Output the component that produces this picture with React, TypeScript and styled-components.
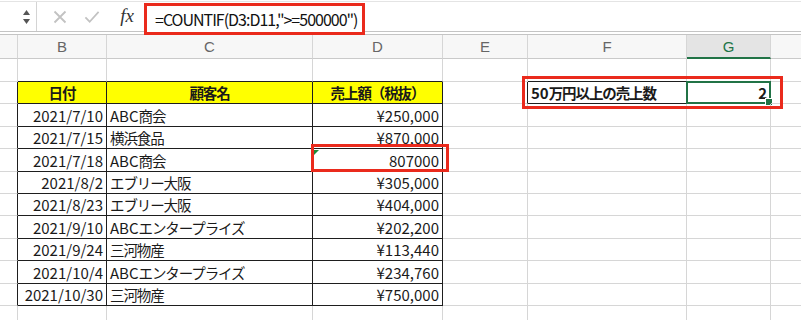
import React from "react";
import styled, { createGlobalStyle } from "styled-components";

const GlobalStyle = createGlobalStyle`
  html, body {
    margin: 0;
    padding: 0;
    background: #ffffff;
    overflow: hidden;
  }
  body {
    font-family: "Noto Sans CJK JP", "Noto Sans", sans-serif;
    color: #1a1a1a;
  }
`;

const GRID_LINE = "#d6d6d6";
const TABLE_LINE = "#1e1e1e";
const EXCEL_GREEN = "#217346";
const MARK_RED = "#ea2a1c";

const COLUMNS = [18, 89, 206, 130, 85, 159, 84, 40];
const COLUMN_TEMPLATE = COLUMNS.map((w) => `${w}px`).join(" ");
const ROW_HEIGHTS = [23, 22, 23, 22, 23, 22, 22, 23, 22, 23, 22, 23];

const Sheet = styled.div`
  width: 801px;
  height: 320px;
  overflow: hidden;
  display: flex;
  flex-direction: column;
`;

/* ---------- formula bar ---------- */

const Toolbar = styled.div`
  margin-top: 1px;
  height: 31px;
  box-sizing: border-box;
  border-top: 1px solid #e4e4e4;
  border-bottom: 1px solid #c4c4c4;
  display: flex;
  align-items: flex-start;
  flex-shrink: 0;
`;

const NameBox = styled.div`
  width: 37px;
  height: 29px;
  box-sizing: border-box;
  border-right: 1px solid #d4d4d4;
  display: flex;
  justify-content: flex-end;
  align-items: center;
  padding-right: 5px;
`;

const ToolIcon = styled.div<{ $gap: number }>`
  width: 16px;
  height: 29px;
  margin-left: ${(p) => p.$gap}px;
  display: flex;
  align-items: center;
  justify-content: center;
`;

const Fx = styled.span`
  width: 16px;
  margin-left: 19px;
  height: 29px;
  line-height: 28px;
  text-align: center;
  font-family: "Liberation Serif", "DejaVu Serif", serif;
  font-style: italic;
  font-size: 19px;
  color: #333;
`;

const FormulaBox = styled.div`
  position: relative;
  z-index: 2;
  margin-left: 9px;
  margin-top: 1px;
  width: 221px;
  height: 32px;
  box-sizing: border-box;
  border: 3px solid ${MARK_RED};
  background: #fff;
  display: flex;
  align-items: center;
  padding-left: 8px;
  font-size: 16px;
  letter-spacing: -1px;
  color: #111;
  white-space: nowrap;
`;

const Separator = styled.div`
  height: 2px;
  border-bottom: 1px solid #c4c4c4;
  flex-shrink: 0;
`;

/* ---------- grid ---------- */

const Grid = styled.div`
  display: grid;
  grid-template-columns: ${COLUMN_TEMPLATE};
  grid-template-rows: 24px ${ROW_HEIGHTS.map((h) => `${h}px`).join(" ")};
`;

const ColHeader = styled.div<{ $active?: boolean }>`
  box-sizing: border-box;
  background: ${(p) => (p.$active ? "#e4e4e4" : "#f7f7f7")};
  border-right: 1px solid ${GRID_LINE};
  border-bottom: ${(p) => (p.$active ? `2px solid ${EXCEL_GREEN}` : "1px solid #cacaca")};
  color: ${(p) => (p.$active ? EXCEL_GREEN : "#666")};
  font-family: "Liberation Sans", Arial, sans-serif;
  font-size: 15px;
  display: flex;
  align-items: center;
  justify-content: center;
  padding-top: ${(p) => (p.$active ? 1 : 0)}px;
`;

const Cell = styled.div<{
  $right: string;
  $bottom: string;
  $align: "left" | "right" | "center";
  $bold?: boolean;
  $fill?: string;
}>`
  position: relative;
  box-sizing: border-box;
  border-right: 1px solid ${(p) => p.$right};
  border-bottom: 1px solid ${(p) => p.$bottom};
  background: ${(p) => p.$fill ?? "transparent"};
  display: flex;
  align-items: center;
  justify-content: ${(p) =>
    p.$align === "left" ? "flex-start" : p.$align === "right" ? "flex-end" : "center"};
  padding: 0 3px 0 3px;
  font-size: 15px;
  font-weight: ${(p) => (p.$bold ? 700 : 400)};
  white-space: nowrap;
  color: #1a1a1a;
`;

// Japanese runs are set a little tighter than the Latin/digit runs
const Jp = styled.span`
  font-size: 14.5px;
  letter-spacing: -1.1px;
`;

/* overlays: selection, error marker, red annotation frames */

const Selection = styled.div`
  position: absolute;
  left: -1px;
  top: -1px;
  right: -1px;
  bottom: -1px;
  border: 2px solid ${EXCEL_GREEN};
  pointer-events: none;
`;

const FillHandle = styled.div`
  position: absolute;
  right: -4px;
  bottom: -4px;
  width: 6px;
  height: 6px;
  background: ${EXCEL_GREEN};
  border: 1px solid #fff;
`;

const ErrorMark = styled.div`
  position: absolute;
  left: 1px;
  top: 1px;
  width: 0;
  height: 0;
  border-top: 5px solid #1e8a3a;
  border-right: 5px solid transparent;
`;

const RedFrame = styled.div<{ $l: number; $t: number; $w: number; $h: number }>`
  position: absolute;
  left: ${(p) => p.$l}px;
  top: ${(p) => p.$t}px;
  width: ${(p) => p.$w}px;
  height: ${(p) => p.$h}px;
  box-sizing: border-box;
  border: 3px solid ${MARK_RED};
  z-index: 3;
  pointer-events: none;
`;

/* ---------- data ---------- */

const sales: [string, string, string][] = [
  ["2021/7/10", "ABC商会", "¥250,000"],
  ["2021/7/15", "横浜食品", "¥870,000"],
  ["2021/7/18", "ABC商会", "807000"],
  ["2021/8/2", "エブリー大阪", "¥305,000"],
  ["2021/8/23", "エブリー大阪", "¥404,000"],
  ["2021/9/10", "ABCエンタープライズ", "¥202,200"],
  ["2021/9/24", "三河物産", "¥113,440"],
  ["2021/10/4", "ABCエンタープライズ", "¥234,760"],
  ["2021/10/30", "三河物産", "¥750,000"],
];

const LETTERS = ["", "B", "C", "D", "E", "F", "G", ""];

const CJK = /([\u3000-\u30ff\u4e00-\u9fff\uff00-\uffef]+)/;

function renderText(text: string) {
  return text
    .split(CJK)
    .filter(Boolean)
    .map((part, i) => (CJK.test(part) ? <Jp key={i}>{part}</Jp> : <span key={i}>{part}</span>));
}

const inTable = (r: number, c: number) => r >= 2 && r <= 11 && c >= 1 && c <= 3;

function rightColor(r: number, c: number) {
  if (r >= 2 && r <= 11 && c >= 0 && c <= 3) return TABLE_LINE;
  if (r === 2 && (c === 4 || c === 5)) return TABLE_LINE;
  return GRID_LINE;
}

function bottomColor(r: number, c: number) {
  if (r >= 1 && r <= 11 && c >= 1 && c <= 3) return TABLE_LINE;
  if ((r === 1 || r === 2) && c === 5) return TABLE_LINE;
  return GRID_LINE;
}

const Spinner = () => (
  <svg width="9" height="18" viewBox="0 0 9 18">
    <path d="M4.5 2 L8 7 L1 7 Z" fill="#555" />
    <path d="M4.5 16 L8 11 L1 11 Z" fill="#555" />
  </svg>
);

const Cross = () => (
  <svg width="14" height="14" viewBox="0 0 14 14">
    <path d="M1.5 1.5 L12.5 12.5 M12.5 1.5 L1.5 12.5" stroke="#c2c2c2" strokeWidth="1.8" fill="none" />
  </svg>
);

const Check = () => (
  <svg width="17" height="14" viewBox="0 0 17 14">
    <path d="M1.5 7.5 L6 12 L15.5 1.5" stroke="#c2c2c2" strokeWidth="1.8" fill="none" />
  </svg>
);

export default function App() {
  const cells: React.ReactNode[] = [];

  LETTERS.forEach((l, c) => {
    cells.push(
      <ColHeader key={`h${c}`} $active={l === "G"}>
        {l}
      </ColHeader>
    );
  });

  for (let r = 1; r <= 12; r++) {
    for (let c = 0; c < COLUMNS.length; c++) {
      let text = "";
      let align: "left" | "right" | "center" = "left";
      let bold = false;
      let fill: string | undefined;
      let extra: React.ReactNode = null;

      if (r === 2 && inTable(r, c)) {
        text = ["日付", "顧客名", "売上額（税抜）"][c - 1];
        align = "center";
        bold = true;
        fill = "#ffff00";
      } else if (r >= 3 && inTable(r, c)) {
        const row = sales[r - 3];
        text = row[c - 1];
        align = c === 2 ? "left" : "right";
        if (r === 5 && c === 3) {
          extra = (
            <>
              <ErrorMark />
              <RedFrame $l={-2} $t={-5} $w={138} $h={28} />
            </>
          );
        }
      } else if (r === 2 && c === 5) {
        text = "50万円以上の売上数";
        bold = true;
        extra = <RedFrame $l={-6} $t={-6} $w={261} $h={33} />;
      } else if (r === 2 && c === 6) {
        text = "2";
        bold = true;
        align = "right";
        extra = (
          <Selection>
            <FillHandle />
          </Selection>
        );
      }

      cells.push(
        <Cell
          key={`${r}-${c}`}
          $right={rightColor(r, c)}
          $bottom={bottomColor(r, c)}
          $align={align}
          $bold={bold}
          $fill={fill}
        >
          {renderText(text)}
          {extra}
        </Cell>
      );
    }
  }

  return (
    <>
      <GlobalStyle />
      <Sheet>
        <Toolbar>
          <NameBox>
            <Spinner />
          </NameBox>
          <ToolIcon $gap={15}>
            <Cross />
          </ToolIcon>
          <ToolIcon $gap={16}>
            <Check />
          </ToolIcon>
          <Fx>fx</Fx>
          <FormulaBox>=COUNTIF(D3:D11,"&gt;=500000")</FormulaBox>
        </Toolbar>
        <Separator />
        <Grid>{cells}</Grid>
      </Sheet>
    </>
  );
}
